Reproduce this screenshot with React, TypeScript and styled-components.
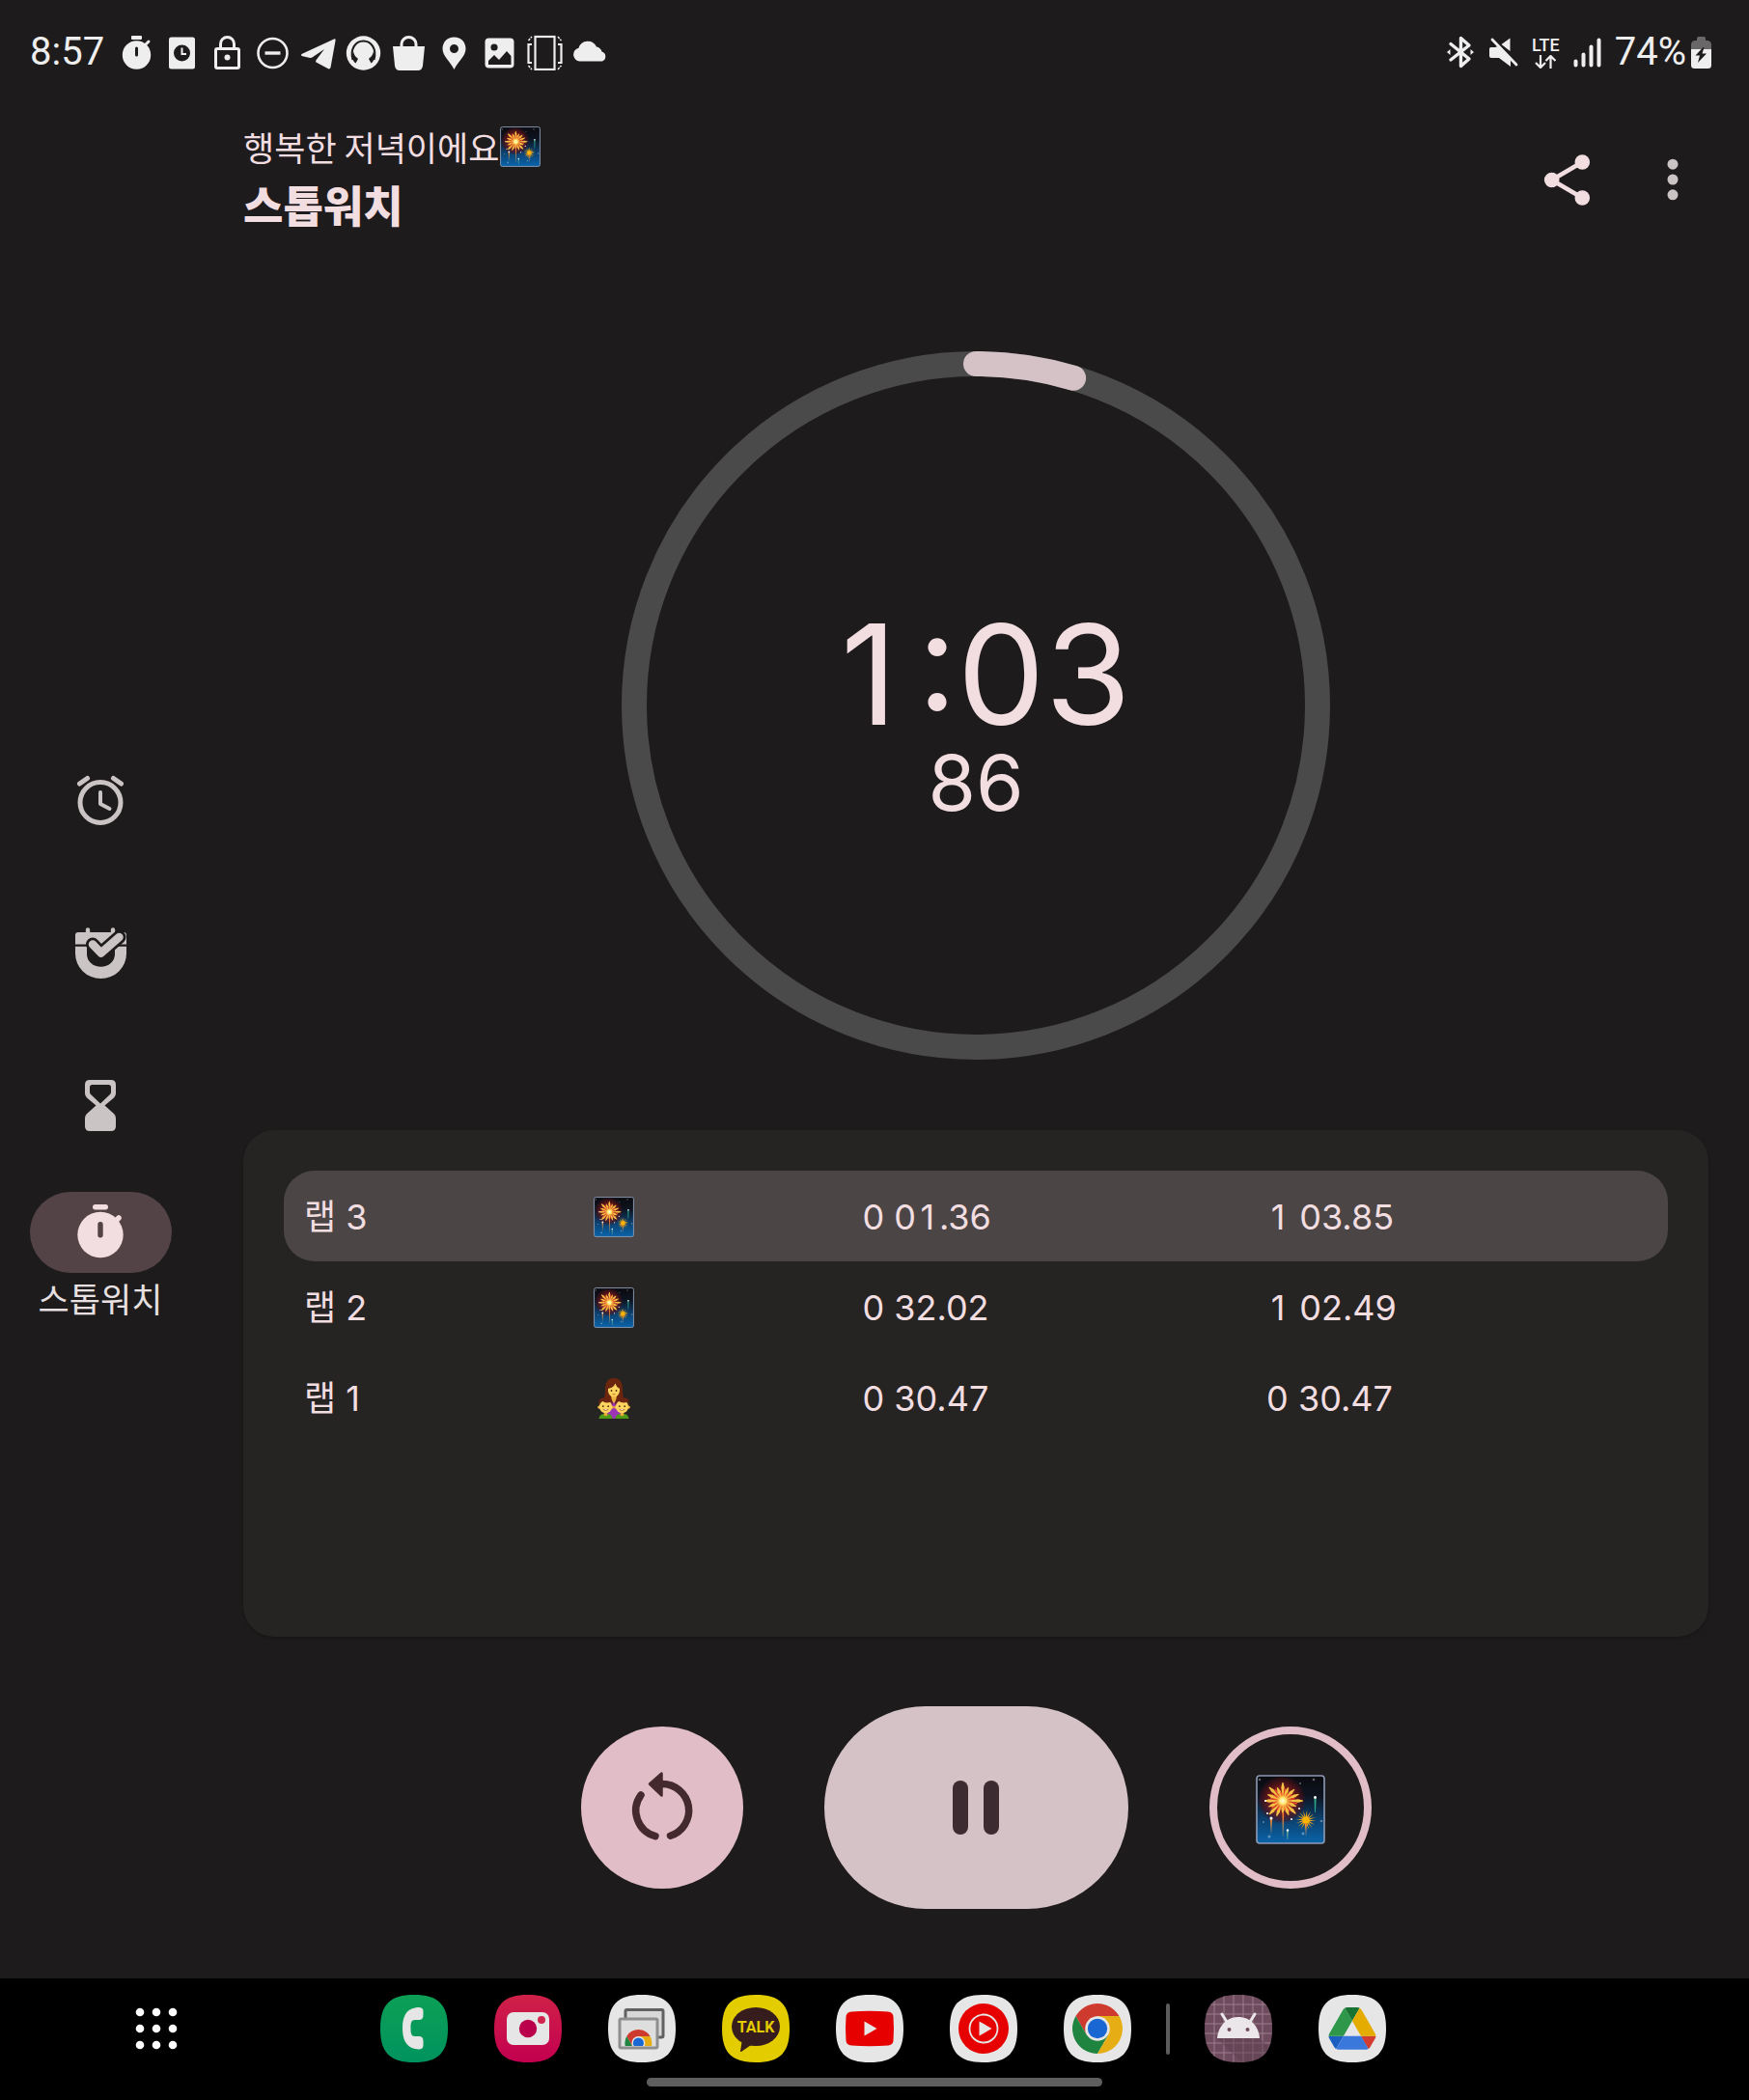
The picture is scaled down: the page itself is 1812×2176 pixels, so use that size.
import React, { useId } from "react";
import styled, { createGlobalStyle } from "styled-components";

const c = {
  bg: "#1e1b1c",
  card: "#252422",
  row: "#4b4645",
  text: "#f2dde1",
  muted: "#cac4c4",
  status: "#eeeeee",
  pill: "#534347",
  accent: "#e1bdc8",
  soft: "#d5c2c7",
  ink: "#3c2c32",
};

const GlobalStyle = createGlobalStyle`
  *, *::before, *::after { box-sizing: border-box; }
  body { margin: 0; background: ${c.bg}; }
  button { border: 0; padding: 0; margin: 0; background: none; font: inherit; color: inherit; cursor: pointer; }
  svg { display: block; flex: none; }
`;

const Screen = styled.div`
  display: flex;
  flex-direction: column;
  min-height: 100vh;
  background: ${c.bg};
  color: ${c.text};
  font-family: Inter, "Noto Sans CJK KR", sans-serif;
`;

/* ---------- status bar ---------- */

const StatusBar = styled.header`
  display: flex;
  align-items: center;
  justify-content: space-between;
  height: 108px;
  padding: 0 39px 0 31px;
  color: ${c.status};
  font-family: Roboto, sans-serif;
  font-size: 40px;
  line-height: 46px;
`;

const StatusGroup = styled.div<{ $gap: number }>`
  display: flex;
  align-items: center;
  gap: ${(p) => p.$gap}px;
`;

const Network = styled.div`
  display: flex;
  flex-direction: column;
  align-items: center;
  gap: 2px;
  font-size: 18px;
  line-height: 17px;
  font-weight: 500;
`;

const StatusIcon = ({ children }: { children: React.ReactNode }) => (
  <svg width="37" height="37" viewBox="0 0 37 37" fill={c.status} aria-hidden="true">
    {children}
  </svg>
);

const Notifications = () => (
  <StatusGroup $gap={10}>
    <StatusIcon>
      <rect x="13" y="1" width="11" height="4" rx="1" />
      <circle cx="18.5" cy="21" r="14.7" />
      <path d="M27 11l4-4" stroke={c.status} strokeWidth="3" strokeLinecap="round" />
      <path d="M18.500 14v7" stroke={c.bg} strokeWidth="3" strokeLinecap="round" />
    </StatusIcon>
    <StatusIcon>
      <rect x="5" y="2.500" width="27" height="33" rx="2.500" />
      <circle cx="18.500" cy="19" r="8.500" fill={c.bg} />
      <path d="M18.500 13.500V20h4.500" fill="none" stroke={c.status} strokeWidth="2" />
    </StatusIcon>
    <StatusIcon>
      <rect x="6.500" y="14.500" width="24" height="20" rx="1.500" fill="none" stroke={c.status} strokeWidth="3" />
      <path d="M11.500 14V9.500a7 7 0 0114 0V14" fill="none" stroke={c.status} strokeWidth="3" />
      <circle cx="18.500" cy="23.500" r="3" />
    </StatusIcon>
    <StatusIcon>
      <circle cx="18.500" cy="19" r="15" fill="none" stroke={c.status} strokeWidth="2.600" />
      <path d="M10.500 19h16" stroke={c.status} strokeWidth="3.400" />
    </StatusIcon>
    <StatusIcon>
      <path d="M1.500 20L35 4.500q1.800-.6 1.600 1.200L31.500 34q-.6 1.800-2.400 1.300L16.500 28.500c-.6-.6-.5-1.600.2-2.600L25 15l-12.600 8.600q-1 .7-2.300.4L1.600 22q-1.200-.8-.1-2z" />
    </StatusIcon>
    <StatusIcon>
      <circle cx="18.500" cy="19" r="17.700" />
      <path d="M7.500 26C4.500 15 10 6.500 18.500 6.500S32.500 15 29.500 26" fill="none" stroke={c.bg} strokeWidth="2" />
      <path d="M8 17c1 5 3 6 5 8l-2.500 4.500C7 27 6 22 8 17zM29 17c-1 5-3 6-5 8l2.500 4.500C30 27 31 22 29 17z" fill={c.bg} />
    </StatusIcon>
    <StatusIcon>
      <path d="M2 12h33l-2 20q-.6 5-5 5H9q-4.400 0-5-5z" />
      <path d="M11 13V9.500a7.500 7 0 0115 0V13" fill="none" stroke={c.status} strokeWidth="3" />
    </StatusIcon>
    <StatusIcon>
      <path fillRule="evenodd" d="M18.500 2.500C11 2.500 6.500 8 6.500 14.500c0 8 8 13 12 21.500 4-8.500 12-13.500 12-21.500 0-6.500-4.500-12-12-12zm0 7.500a4.500 4.500 0 110 9 4.500 4.500 0 010-9z" />
    </StatusIcon>
    <StatusIcon>
      <rect x="3.500" y="3.500" width="30" height="31" rx="4" />
      <circle cx="13" cy="13" r="3.600" fill={c.bg} />
      <path d="M7 31v-4l6-6 5 5 8-9 4.500 5v9z" fill={c.bg} />
    </StatusIcon>
    <StatusIcon>
      <g fill="none" stroke={c.status} strokeWidth="2.200">
        <rect x="8.500" y="2" width="20" height="34" />
        <path d="M5 10H1.500v19H5M32 10h3.500v19H32" />
        <path d="M1.500 6L5 2M32 2l3.500 4M1.500 32L5 36M32 36l3.500-4" strokeDasharray="2.500 1" strokeWidth="1.500" />
      </g>
    </StatusIcon>
    <StatusIcon>
      <path d="M7.500 27.500a7 7 0 01-1-13.800A10 10 0 0125 12.500a7 7 0 015.500 5A5.300 5.300 0 0131 27.500z" />
    </StatusIcon>
  </StatusGroup>
);

const BluetoothIcon = () => (
  <svg width="30" height="36" viewBox="0 0 30 36" aria-hidden="true">
    <path d="M5 9.500l19 15.500-8.500 7.500V3.500L24 11 5 26" fill="none" stroke={c.status} strokeWidth="3.400" strokeLinejoin="round" strokeLinecap="round" />
    <path d="M1 18l3.500-3v6zM29 18l-3.500-3v6z" fill={c.status} />
  </svg>
);

const MuteIcon = () => (
  <svg width="31" height="34" viewBox="0 0 31 34" aria-hidden="true">
    <path d="M2.500 12H7l2.500-1L23 24v8L11 23H3q-2 0-2-2v-7q0-2 1.500-2zM22.500 2.500V16L13.500 9z" fill={c.status} />
    <path d="M4 4l25 26" stroke={c.status} strokeWidth="2.800" strokeLinecap="round" />
  </svg>
);

const ArrowsIcon = () => (
  <svg width="22" height="14" viewBox="0 0 22 14" aria-hidden="true">
    <path d="M6 0v12M1 8l5 5 5-5M16.500 14V2M11.500 6l5-5 5 5" fill="none" stroke={c.status} strokeWidth="2.200" />
  </svg>
);

const SignalIcon = () => (
  <svg width="29" height="31" viewBox="0 0 29 31" aria-hidden="true">
    <path d="M2.500 24.500v4M10.500 17.500v11M18.500 9.500v19M26.500 2.500v26" stroke={c.status} strokeWidth="4" strokeLinecap="round" />
  </svg>
);

const BatteryIcon = () => (
  <svg width="21" height="33" viewBox="0 0 21 33" aria-hidden="true">
    <path d="M6 4V1.500Q6 0 7.500 0h6Q15 0 15 1.500V4h2.500Q21 5 21 8v5H0V8q0-3 3.500-4z" fill="#696768" />
    <path d="M0 13h21v16.500q0 3.500-3.500 3.500h-14Q0 33 0 29.500z" fill={c.status} />
    <path d="M12.500 11L4.500 19.500h4.500L7 27l9-9.500h-4.500l2-6.500z" fill={c.bg} />
  </svg>
);

/* ---------- emoji drawings ---------- */

const bigRays = [19, 15, 17, 18, 21, 15, 19, 16, 13, 17, 20, 16, 19, 17, 20, 15];

const Fireworks = ({ size }: { size: number }) => {
  const id = useId();
  return (
    <svg width={size} height={size} viewBox="0 0 72 72" role="img" aria-label="불꽃놀이">
      <defs>
        <linearGradient id={`${id}sky`} x1="0" y1="0" x2="0" y2="1">
          <stop offset="0" stopColor="#0a0a0e" />
          <stop offset="0.300" stopColor="#0d1420" />
          <stop offset="0.650" stopColor="#0c4170" />
          <stop offset="1" stopColor="#0a64aa" />
        </linearGradient>
        <radialGradient id={`${id}glow`}>
          <stop offset="0" stopColor="#e8301a" />
          <stop offset="0.450" stopColor="#a01c18" stopOpacity="0.800" />
          <stop offset="0.850" stopColor="#4d1018" stopOpacity="0.550" />
          <stop offset="1" stopColor="#4d1020" stopOpacity="0" />
        </radialGradient>
        <radialGradient id={`${id}core`}>
          <stop offset="0" stopColor="#fffde0" />
          <stop offset="0.400" stopColor="#ffe668" />
          <stop offset="1" stopColor="#ff6a20" stopOpacity="0" />
        </radialGradient>
        <linearGradient id={`${id}trail`} x1="0" y1="0" x2="0" y2="1">
          <stop offset="0" stopColor="#ff7a20" />
          <stop offset="1" stopColor="#ffcf6a" stopOpacity="0.100" />
        </linearGradient>
      </defs>
      <rect x="1" y="1" width="70" height="70" rx="3" fill={`url(#${id}sky)`} stroke="#8d9bb5" strokeWidth="1.600" />
      <circle cx="27" cy="26" r="25" fill={`url(#${id}glow)`} />
      <path d="M27.500 40h1.600v24h-1.600z" fill={`url(#${id}trail)`} />
      {bigRays.map((r, i) => (
        <g key={i} transform={`translate(28 27) rotate(${i * 22.5})`}>
          <path d={`M0 -2L1.700 ${-r + 5}L.5 ${-r}H-.5L-1.700 ${-r + 5}Z`} fill="#f4c145" />
          <path d={`M0 -3L.9 ${-r + 6}H-.9Z`} fill="#f0482a" transform="rotate(11)" />
        </g>
      ))}
      <circle cx="28" cy="27" r="9" fill={`url(#${id}core)`} />
      {Array.from({ length: 16 }, (_, i) => (
        <path key={i} d="M0 0L.7 -4L0 -10.500L-.7 -4Z" fill="#e8a21c" transform={`translate(52 47) rotate(${i * 22.5 + 6})`} />
      ))}
      <circle cx="52" cy="47" r="3.600" fill="#ffb400" />
      <path d="M51 50h2l-.6 14h-.8z" fill={`url(#${id}trail)`} />
      <path d="M14.800 45h2.400l-.9 17h-.8z" fill={`url(#${id}trail)`} />
      <path d="M32 58h1.800l-.6 9h-.6z" fill="#8ecf9a" opacity="0.700" />
      <path d="M60.500 24h2.200l-.8 15h-.8z" fill="#34c79b" opacity="0.800" />
      <g fill="#fff">
        <circle cx="61.500" cy="23.500" r="1.400" />
        <circle cx="16" cy="45" r="1.500" />
        <circle cx="33" cy="57.500" r="1.200" />
        <circle cx="10" cy="27" r="1" />
        <circle cx="45" cy="35" r="1" />
        <circle cx="37" cy="46" r="1" />
        <circle cx="12" cy="40" r="1" />
        <g opacity="0.350">
          <circle cx="4" cy="5" r="1.300" />
          <circle cx="60" cy="5" r="1.300" />
          <circle cx="46" cy="9" r="1" />
          <circle cx="68" cy="48" r="1.300" />
          <circle cx="8" cy="49" r="1" />
          <circle cx="14" cy="64" r="1.500" />
          <circle cx="49" cy="61" r="1.400" />
        </g>
      </g>
    </svg>
  );
};

const Child = ({ x }: { x: number }) => (
  <g transform={`translate(${x} 22) scale(.9)`}>
    <path d="M-8 23q1-6 5-6h6q4 0 5 6z" fill="#4f9a16" />
    <rect x="-2" y="14" width="4" height="5" fill="#e9a93c" />
    <circle cx="-7.500" cy="9" r="1.800" fill="#f0b43c" />
    <circle cx="7.500" cy="9" r="1.800" fill="#f0b43c" />
    <circle cx="0" cy="8.500" r="7.400" fill="#fdd45e" />
    <path d="M-8 7C-9-2-4-2 0-2s9 0 8 9L6 3Q0 5-4 2L-7 5z" fill="#6b2410" />
    <circle cx="-3" cy="8" r="1" fill="#59300f" />
    <circle cx="3" cy="8" r="1" fill="#59300f" />
    <path d="M-3 11.500q3 2.500 6 0" fill="#fff" stroke="#8b3a14" strokeWidth="0.800" />
  </g>
);

const Family = () => (
  <svg width="42" height="42" viewBox="0 0 42 42" role="img" aria-label="가족">
    <path d="M21 0c-7.500 0-9 6-9 12 0 5-1 7-1 11h20c0-4-1-6-1-11 0-6-1.500-12-9-12z" fill="#6a260f" />
    <path d="M13 42q0-20 8-20t8 20z" fill="#9b35b5" />
    <path d="M18 17h6l-.6 6-2.400 3-2.400-3z" fill="#edb13d" />
    <path d="M15 11q5.500-1 7.500-5.500.8 3.500 4.500 5.500c.4 5.500-2.500 8.500-6 8.500s-6.400-3-6-8.500z" fill="#fdd45e" />
    <circle cx="18.500" cy="13" r="0.900" fill="#59300f" />
    <circle cx="23.500" cy="13" r="0.900" fill="#59300f" />
    <path d="M19.500 16.500q1.500 1 3 0" fill="none" stroke="#c05a20" strokeWidth="0.900" />
    <Child x={12.5} />
    <Child x={29.5} />
  </svg>
);

/* ---------- side navigation ---------- */

const Body = styled.div`
  display: flex;
  flex: 1;
`;

const Rail = styled.nav`
  display: flex;
  flex: none;
  flex-direction: column;
  justify-content: center;
  width: 208px;
  padding-bottom: 26px;
`;

const RailItem = styled.button`
  display: flex;
  flex-direction: column;
  align-items: center;
  justify-content: center;
  height: 158px;
  color: ${c.muted};
`;

const RailPill = styled.span`
  display: grid;
  place-items: center;
  width: 147px;
  height: 84px;
  border-radius: 42px;
  background: ${c.pill};
  color: ${c.text};
`;

const RailLabel = styled.span`
  color: #e8e0e1;
  font-family: "Noto Sans CJK KR", sans-serif;
  font-size: 35px;
  line-height: 52px;
`;

const AlarmIcon = () => (
  <svg width="56" height="56" viewBox="0 0 56 56" fill="none" stroke="currentColor" strokeWidth="5" strokeLinecap="round" strokeLinejoin="round" aria-hidden="true">
    <circle cx="28" cy="30.500" r="21" />
    <path d="M6.500 11l8-5.500M49.500 11l-8-5.500" />
    <path d="M28 20v12l9.500 5" strokeWidth="4" />
  </svg>
);

const RoutineIcon = () => (
  <svg width="56" height="56" viewBox="0 0 56 56" fill="none" aria-hidden="true">
    <path d="M2 19.500V10q0-3 3-3h47q3 0 3 3v9.500z" fill="currentColor" />
    <path d="M15 8V4.500M41 8V4.500" stroke="currentColor" strokeWidth="4.400" strokeLinecap="round" />
    <path d="M2 21.800h53V29a26.500 26 0 01-53 0z" fill="currentColor" />
    <path d="M14 21.800h29v8a14.500 13 0 01-29 0z" fill={c.bg} />
    <path d="M20 19.500l8.700 9L47.500 12" stroke={c.bg} strokeWidth="14" strokeLinecap="round" strokeLinejoin="round" />
    <path d="M20 19.500l8.700 9L47.500 12" stroke="currentColor" strokeWidth="8.500" strokeLinecap="round" strokeLinejoin="round" />
  </svg>
);

const HourglassIcon = () => (
  <svg width="56" height="56" viewBox="0 0 56 56" fill="currentColor" aria-hidden="true">
    <path
      fillRule="evenodd"
      d="M17 2h22q5 0 5 5v9q0 2.500-2 4.500L32.500 28.500 42 37q2 2 2 4.500V50q0 5-5 5H17q-5 0-5-5v-8.500q0-2.500 2-4.500l9.500-8.500L14 20.500q-2-2-2-4.500V7q0-5 5-5zm2.500 5q-2.500 0-2.500 2.500v5q0 1.500 1 2.500l10 9.500L38 17q1-1 1-2.500v-5Q39 7 36.500 7z"
    />
  </svg>
);

const StopwatchIcon = () => (
  <svg width="60" height="60" viewBox="0 0 60 60" fill="currentColor" aria-hidden="true">
    <rect x="22" y="1" width="16" height="5.500" rx="2.700" />
    <circle cx="30" cy="32.500" r="23.700" />
    <path d="M45 19l4-4" stroke="currentColor" strokeWidth="5.500" strokeLinecap="round" />
    <rect x="27.300" y="19" width="5.400" height="16.500" rx="2.700" fill={c.pill} />
  </svg>
);

/* ---------- stopwatch ---------- */

const Main = styled.main`
  display: flex;
  flex: 1;
  flex-direction: column;
  min-width: 0;
  padding: 18px 42px 72px 44px;
`;

const TitleBar = styled.div`
  display: flex;
  align-items: center;
  justify-content: space-between;
  margin-bottom: 118px;
`;

const Greeting = styled.p`
  display: flex;
  align-items: center;
  gap: 1px;
  margin: 0;
  font-family: "Noto Sans CJK KR", sans-serif;
  font-size: 35px;
  line-height: 52px;
`;

const Title = styled.h1`
  margin: 0;
  font-family: "Noto Sans CJK KR", sans-serif;
  font-size: 45px;
  font-weight: 900;
  line-height: 68px;
`;

const Actions = styled.div`
  display: flex;
  gap: 36px;
`;

const IconButton = styled.button`
  display: grid;
  place-items: center;
  width: 74px;
  height: 74px;
`;

const Dial = styled.section`
  display: grid;
  place-items: center;
  margin-bottom: 73px;

  > * {
    grid-area: 1 / 1;
  }
`;

const Readout = styled.div`
  display: flex;
  flex-direction: column;
  align-items: center;
  padding-top: 16px;
`;

const NarrowDigit = styled.span<{ $width: number }>`
  display: inline-block;
  min-width: ${(p) => p.$width}px;
  text-align: center;
`;

const Digits = ({ value, cell }: { value: string; cell: number }) => (
  <>
    {value.split(/(1)/).map((part, i) =>
      part === "1" ? (
        <NarrowDigit key={i} $width={cell}>
          1
        </NarrowDigit>
      ) : (
        part
      )
    )}
  </>
);

const Seconds = styled.span`
  font-size: 144px;
  line-height: 144px;
  font-feature-settings: "case" 1;
`;

const Hundredths = styled.span`
  font-size: 80px;
  line-height: 80px;
`;

const RADIUS = 354;
const SWEEP = 16.6 / 360;

const ProgressRing = () => (
  <svg width="734" height="734" viewBox="0 0 734 734" fill="none" strokeWidth="26" aria-hidden="true">
    <circle cx="367" cy="367" r={RADIUS} stroke="#4a4a4a" />
    <circle
      cx="367"
      cy="367"
      r={RADIUS}
      stroke={c.soft}
      strokeLinecap="round"
      pathLength={1}
      strokeDasharray={`${SWEEP} 1`}
      transform="rotate(-90 367 367)"
    />
  </svg>
);

const LapCard = styled.section`
  flex: 1;
  min-height: 366px;
  padding: 42px;
  border-radius: 32px;
  background: ${c.card};
  box-shadow: 0 1px 3px rgba(0, 0, 0, 0.3);
`;

const LapTable = styled.table`
  width: 100%;
  table-layout: fixed;
  border-collapse: separate;
  border-spacing: 0;
  font-size: 36px;
  line-height: 42px;
`;

const LapRow = styled.tr<{ $current: boolean }>`
  height: 94px;

  > * {
    padding: 2px 0 0;
    background: ${(p) => (p.$current ? c.row : "transparent")};
    font-weight: 400;
    text-align: left;
    vertical-align: middle;
  }
  > :first-child {
    padding-left: 21px;
    border-radius: 32px 0 0 32px;
  }
  > :last-child {
    border-radius: 0 32px 32px 0;
  }
`;

const Column = styled.col<{ $width: string }>`
  width: ${(p) => p.$width};
`;

const Controls = styled.div`
  display: flex;
  align-items: center;
  justify-content: center;
  gap: 84px;
  margin-top: 72px;
`;

const RoundButton = styled.button<{ $outlined?: boolean }>`
  display: grid;
  place-items: center;
  width: 168px;
  height: 168px;
  padding-top: ${(p) => (p.$outlined ? 4 : 0)}px;
  border: ${(p) => (p.$outlined ? `8px solid ${c.accent}` : "0")};
  border-radius: 50%;
  background: ${(p) => (p.$outlined ? "transparent" : c.accent)};
`;

const PauseButton = styled.button`
  display: grid;
  place-items: center;
  width: 315px;
  height: 210px;
  border-radius: 105px;
  background: ${c.soft};
`;

const laps = [
  { name: "랩 3", icon: "fireworks", split: "0 01.36", total: "1 03.85" },
  { name: "랩 2", icon: "fireworks", split: "0 32.02", total: "1 02.49" },
  { name: "랩 1", icon: "family", split: "0 30.47", total: "0 30.47" },
];

/* ---------- taskbar ---------- */

const Taskbar = styled.footer`
  display: flex;
  flex-direction: column;
  gap: 16px;
  align-items: center;
  padding: 17px 0 14px;
  background: #000;
`;

const TaskbarRow = styled.div`
  display: grid;
  grid-template-columns: 1fr auto 1fr;
  align-items: center;
  width: 100%;
  padding: 0 119px 0 136px;
`;

const Drawer = styled.button`
  width: 52px;
`;

const Apps = styled.div`
  display: flex;
  align-items: center;
  gap: 48px;
`;

const AppButton = styled.button`
  width: 70px;
  height: 70px;
`;

const Divider = styled.span`
  width: 4px;
  height: 53px;
  margin: 0 -12px;
  border-radius: 2px;
  background: #5c5c5c;
`;

const HomeHandle = styled.div`
  width: 26%;
  height: 9px;
  border-radius: 5px;
  background: #5e5e5e;
`;

const SQUIRCLE = "M35 0C60 0 70 10 70 35S60 70 35 70 0 60 0 35 10 0 35 0Z";
const LIGHT = "#e6e6e6";

const DockApp = ({ label, fill = LIGHT, children }: { label: string; fill?: string; children: React.ReactNode }) => (
  <AppButton aria-label={label}>
    <svg width="70" height="70" viewBox="0 0 70 70">
      <path d={SQUIRCLE} fill={fill} />
      {children}
    </svg>
  </AppButton>
);

const Gradient = ({ id, from, to }: { id: string; from: string; to: string }) => (
  <linearGradient id={id} x1="0" y1="0" x2="0" y2="1">
    <stop offset="0" stopColor={from} />
    <stop offset="1" stopColor={to} />
  </linearGradient>
);

const ChromeWheel = () => (
  <>
    <path d="M57.500 22H35L23.700 41.500 12.500 22A26 26 0 0157.500 22z" fill="#cf3a2e" />
    <path d="M12.500 22l11.200 19.500h22.600L35 61A26 26 0 0112.500 22z" fill="#1f8440" />
    <path d="M57.500 22H35l11.300 19.500L35 61a26 26 0 0022.500-39z" fill="#e6ad14" />
    <circle cx="35" cy="35" r="12.800" fill={LIGHT} />
    <circle cx="35" cy="35" r="10.200" fill="#1967d2" />
  </>
);

const Dock = () => (
  <Apps>
    <DockApp label="전화" fill="url(#phone)">
      <defs>
        <Gradient id="phone" from="#0c9f55" to="#00935e" />
      </defs>
      <path
        d="M36 13.500C26 15 23 24 23 34.500S26 54 36 56c5 1 8.500.5 8.500-3.500V48c0-4-2-5-5-5H36c-4 0-4.500-3-4.500-8.500S32 26 36 26h3.500c3 0 5-1 5-5v-4c0-4-3.500-4.500-8.500-3.500z"
        fill={LIGHT}
      />
    </DockApp>
    <DockApp label="카메라" fill="url(#camera)">
      <defs>
        <Gradient id="camera" from="#cf2148" to="#c3004f" />
      </defs>
      <rect x="13" y="18" width="44" height="34" rx="7" fill={LIGHT} />
      <circle cx="35" cy="35" r="9.200" fill="#bb004b" />
      <circle cx="49" cy="26" r="4" fill="#d0254c" />
    </DockApp>
    <DockApp label="원격 데스크톱">
      <defs>
        <clipPath id="window">
          <path d="M13 26h37v27H13z" />
        </clipPath>
      </defs>
      <rect x="18" y="15.500" width="39" height="28.500" rx="1.500" fill="#d8d8d8" stroke="#616161" strokeWidth="3" />
      <rect x="12" y="25" width="39" height="30" rx="1.500" fill="#dedede" stroke="#8f8f8f" strokeWidth="3" />
      <g clipPath="url(#window)">
        <g transform="translate(12.500 31) scale(.54)">
          <ChromeWheel />
        </g>
      </g>
    </DockApp>
    <DockApp label="카카오톡" fill="#e3cc00">
      <ellipse cx="35" cy="33" rx="25" ry="20" fill="#371c1d" />
      <path d="M21 46l-2 12.500q.3 1 1.300.3L33 50z" fill="#371c1d" />
      <text x="35" y="39" textAnchor="middle" fontFamily="Roboto, sans-serif" fontWeight="700" fontSize="16" fill="#e3cc00">
        TALK
      </text>
    </DockApp>
    <DockApp label="YouTube">
      <path d="M16 17.500q19-1.500 38 0 5 .5 5.500 5 1 12.500 0 25-.5 4.500-5.500 5-19 1.500-38 0-5-.5-5.500-5-1-12.500 0-25 .5-4.500 5.500-5z" fill="#e60000" />
      <path d="M29.500 27.500v15L42.500 35z" fill={LIGHT} />
    </DockApp>
    <DockApp label="YouTube Music">
      <circle cx="35" cy="35" r="26" fill="#e60000" />
      <circle cx="35" cy="35" r="14.500" fill="none" stroke={LIGHT} strokeWidth="1.800" />
      <path d="M30.500 27.500v15L43.500 35z" fill={LIGHT} />
    </DockApp>
    <DockApp label="Chrome">
      <ChromeWheel />
    </DockApp>
    <Divider />
    <DockApp label="시계" fill="#6f4b5e">
      <defs>
        <clipPath id="tile">
          <path d={SQUIRCLE} />
        </clipPath>
      </defs>
      <g clipPath="url(#tile)">
        <path d="M10 0v70M20 0v70M30 0v70M40 0v70M50 0v70M60 0v70M0 10h70M0 20h70M0 30h70M0 40h70M0 50h70M0 60h70" stroke="#9a7f8d" strokeWidth="1" />
        <path d="M13 45h44l13 13v12H38z" fill="#5c3d4d" opacity="0.450" />
      </g>
      <path d="M13 45C14 32 23 23 35 23s21 9 22 22z" fill="#ebe6e9" />
      <path d="M23 28l-5-8M47 28l5-8" stroke="#ebe6e9" strokeWidth="3" strokeLinecap="round" />
      <circle cx="25.500" cy="36" r="2" fill="#6f4b5e" />
      <circle cx="44.500" cy="36" r="2" fill="#6f4b5e" />
    </DockApp>
    <DockApp label="Drive">
      <g transform="translate(10.500 13) scale(.56)">
        <path d="M6.600 66.850l3.850 6.650c.8 1.400 1.950 2.500 3.300 3.300l13.750-23.800H0c0 1.550.4 3.100 1.200 4.500z" fill="#1b5fc0" />
        <path d="M43.650 25L29.900 1.200c-1.350.8-2.500 1.900-3.300 3.300l-25.400 44A9.060 9.060 0 000 53h27.500z" fill="#2f974a" />
        <path d="M73.550 76.800c1.350-.8 2.500-1.900 3.300-3.300l1.600-2.750 7.650-13.250c.8-1.400 1.200-2.950 1.200-4.500H59.800l5.850 11.500z" fill="#d23d30" />
        <path d="M43.650 25L57.400 1.200C56.050.4 54.500 0 52.900 0H34.400c-1.600 0-3.150.45-4.500 1.200z" fill="#187332" />
        <path d="M59.800 53H27.500L13.750 76.800c1.350.8 2.900 1.200 4.500 1.200h50.800c1.600 0 3.150-.45 4.500-1.200z" fill="#3b78dc" />
        <path d="M73.400 26.500l-12.700-22c-.8-1.400-1.950-2.500-3.300-3.300L43.650 25l16.150 28h27.450c0-1.550-.4-3.100-1.200-4.500z" fill="#e4ab00" />
      </g>
    </DockApp>
  </Apps>
);

export default function App() {
  return (
    <Screen>
      <GlobalStyle />
      <StatusBar>
        <StatusGroup $gap={15}>
          <span>8:57</span>
          <Notifications />
        </StatusGroup>
        <StatusGroup $gap={14}>
          <BluetoothIcon />
          <MuteIcon />
          <Network>
            <span>LTE</span>
            <ArrowsIcon />
          </Network>
          <SignalIcon />
          <StatusGroup $gap={5}>
            <span>74%</span>
            <BatteryIcon />
          </StatusGroup>
        </StatusGroup>
      </StatusBar>

      <Body>
        <Rail>
          <RailItem aria-label="알람">
            <AlarmIcon />
          </RailItem>
          <RailItem aria-label="루틴">
            <RoutineIcon />
          </RailItem>
          <RailItem aria-label="타이머">
            <HourglassIcon />
          </RailItem>
          <RailItem aria-current="page">
            <RailPill>
              <StopwatchIcon />
            </RailPill>
            <RailLabel>스톱워치</RailLabel>
          </RailItem>
        </Rail>

        <Main>
          <TitleBar>
            <div>
              <Greeting>
                행복한 저녁이에요
                <Fireworks size={42} />
              </Greeting>
              <Title>스톱워치</Title>
            </div>
            <Actions>
              <IconButton aria-label="공유">
                <svg width="49" height="55" viewBox="0 0 49 55" fill={c.text}>
                  <path d="M40.300 9L8.700 27.500l31.600 18.500" fill="none" stroke={c.text} strokeWidth="4.600" />
                  <circle cx="40.300" cy="9" r="7.800" />
                  <circle cx="8.700" cy="27.500" r="7.800" />
                  <circle cx="40.300" cy="46" r="7.800" />
                </svg>
              </IconButton>
              <IconButton aria-label="더보기">
                <svg width="12" height="44" viewBox="0 0 12 44" fill={c.muted}>
                  <circle cx="6" cy="6.200" r="5.500" />
                  <circle cx="6" cy="22" r="5.500" />
                  <circle cx="6" cy="37.800" r="5.500" />
                </svg>
              </IconButton>
            </Actions>
          </TitleBar>

          <Dial>
            <ProgressRing />
            <Readout>
              <Seconds>
                <Digits value="1:03" cell={100} />
              </Seconds>
              <Hundredths>86</Hundredths>
            </Readout>
          </Dial>

          <LapCard>
            <LapTable>
              <colgroup>
                <Column $width="22.4%" />
                <Column $width="19.4%" />
                <Column $width="29.2%" />
                <Column $width="29%" />
              </colgroup>
              <tbody>
                {laps.map((lap, i) => (
                  <LapRow key={lap.name} $current={i === 0}>
                    <th scope="row">{lap.name}</th>
                    <td>{lap.icon === "family" ? <Family /> : <Fireworks size={42} />}</td>
                    <td>
                      <Digits value={lap.split} cell={24} />
                    </td>
                    <td>
                      <Digits value={lap.total} cell={24} />
                    </td>
                  </LapRow>
                ))}
              </tbody>
            </LapTable>
          </LapCard>

          <Controls>
            <RoundButton aria-label="초기화">
              <svg width="76" height="76" viewBox="0 0 76 76" fill="none" stroke="#44292f" strokeWidth="7.500" strokeLinecap="round" strokeLinejoin="round">
                <path d="M38 13.500A27.500 27.500 0 0146.500 67.200M16 25A27.500 27.500 0 0031 67.600" />
                <path d="M25 13.500l12.500-11v23z" fill="#44292f" strokeWidth="2.500" />
              </svg>
            </RoundButton>
            <PauseButton aria-label="일시정지">
              <svg width="48" height="56" viewBox="0 0 48 56" fill={c.ink}>
                <rect x="0" y="0" width="16" height="56" rx="8" />
                <rect x="32" y="0" width="16" height="56" rx="8" />
              </svg>
            </PauseButton>
            <RoundButton $outlined aria-label="랩 기록">
              <Fireworks size={72} />
            </RoundButton>
          </Controls>
        </Main>
      </Body>

      <Taskbar>
        <TaskbarRow>
          <Drawer aria-label="앱 목록">
            <svg width="52" height="52" viewBox="0 0 52 52" fill="#fff">
              {[9, 26, 43].map((y) => [9, 26, 43].map((x) => <circle key={`${x}-${y}`} cx={x} cy={y} r="4.300" />))}
            </svg>
          </Drawer>
          <Dock />
        </TaskbarRow>
        <HomeHandle />
      </Taskbar>
    </Screen>
  );
}
